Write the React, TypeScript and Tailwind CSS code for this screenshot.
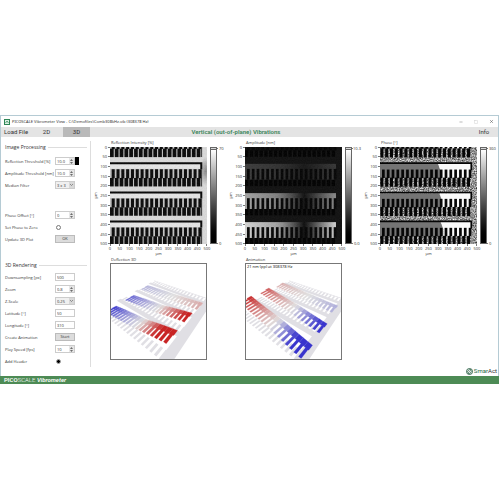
import React, { useId, useState } from 'react';
import { Minus, Square, X } from 'lucide-react';

type MapKind = 'reflection' | 'amplitude' | 'phase';
type Point = [number, number];

const TICKS = [0, 50, 100, 150, 200, 250, 300, 350, 400, 450, 500];

// Top edge of each comb row, in map units (288 units = 500 µm)
const ROWS = [-42, 45, 132, 218];
const PITCH = 14.3;
const TEETH = Array.from({ length: 19 }, (_, i) => i);

const AMPLITUDE_STOPS = [
  ['#0c0c0c', '#0a0a0a', '#0c0c0c'],
  ['#3c3c3c', '#161616', '#363636'],
  ['#a4a4a4', '#101010', '#8c8c8c'],
  ['#d4d4d4', '#0c0c0c', '#d4d4d4'],
];

const MAPS: { kind: MapKind; title: string; max: string; min: string }[] = [
  { kind: 'reflection', title: 'Reflection Intensity [%]', max: '70', min: '0' },
  { kind: 'amplitude', title: 'Amplitude [nm]', max: '10.3', min: '0.0' },
  { kind: 'phase', title: 'Phase [°]', max: '360', min: '0' },
];

function ReflectionMap() {
  return (
    <>
      {ROWS.map((b) => (
        <g key={b}>
          <rect x={0} y={b + 6} width={270} height={14} fill="#e8e8e8" />
          <rect x={0} y={b + 20} width={270} height={52} fill="#c4c4c4" />
          <path d={`M0 ${b + 3}H271V${b + 21}`} fill="none" stroke="#050505" strokeWidth={6} />
          {TEETH.map((i) => (
            <g key={i} fill="#080808">
              <rect x={i * PITCH + 5} y={b + 21} width={9} height={27} />
              <rect x={i * PITCH} y={b + 47} width={11} height={25} />
            </g>
          ))}
          <path d={`M272 ${b + 21}V${b + 72}`} stroke="#333333" strokeWidth={3} />
        </g>
      ))}
    </>
  );
}

function AmplitudeMap({ id }: { id: string }) {
  return (
    <>
      {ROWS.map((b, row) => (
        <g key={b}>
          <linearGradient id={`${id}-amp-${row}`} gradientUnits="userSpaceOnUse" x1="0" y1="0" x2="270" y2="0">
            <stop offset="0" stopColor={AMPLITUDE_STOPS[row][0]} />
            <stop offset="0.35" stopColor={AMPLITUDE_STOPS[row][0]} stopOpacity="0.75" />
            <stop offset="0.65" stopColor={AMPLITUDE_STOPS[row][1]} />
            <stop offset="1" stopColor={AMPLITUDE_STOPS[row][2]} />
          </linearGradient>
          {TEETH.map((i) => (
            <rect key={i} x={i * PITCH} y={b + 46} width={10} height={25} fill="#000000" />
          ))}
          <rect x={0} y={b + 5} width={270} height={47} fill={`url(#${id}-amp-${row})`} />
          {TEETH.map((i) => (
            <rect key={i} x={i * PITCH + 6} y={b + 20} width={8} height={32} fill="#040404" />
          ))}
        </g>
      ))}
    </>
  );
}

function PhaseMap() {
  return (
    <>
      {ROWS.map((b, row) => {
        const split = 168 + row * 4;
        return (
          <g key={b}>
            <path d={`M0 ${b + 5}H${split}L${split + 8} ${b + 26}V${b + 48}H0Z`} fill="#747474" />
            <path d={`M${split} ${b + 5}H271V${b + 48}H${split + 8}V${b + 26}Z`} fill="#fafafa" />
            <path d={`M0 ${b + 3}H271V${b + 24}`} fill="none" stroke="#050505" strokeWidth={5} />
            {TEETH.map((i) => (
              <g key={i} fill="#060606">
                <rect x={i * PITCH + 6} y={b + 22} width={8} height={25} />
                <rect x={i * PITCH + 1} y={b + 46} width={9} height={27} />
              </g>
            ))}
          </g>
        );
      })}
    </>
  );
}

function HeatMap({ kind, title }: { kind: MapKind; title: string }) {
  const id = useId();
  return (
    <svg viewBox="0 0 288 288" role="img" aria-label={title} className="block aspect-square w-full">
      <filter id={`${id}-fine`} x="0" y="0" width="100%" height="100%" colorInterpolationFilters="sRGB">
        <feTurbulence type="fractalNoise" baseFrequency="0.28" numOctaves={2} seed={7} />
        <feColorMatrix values="1.2 0 0 0 -0.02  1.2 0 0 0 -0.02  1.2 0 0 0 -0.02  0 0 0 0 1" />
      </filter>
      <radialGradient id={`${id}-shade`}>
        <stop offset="0" stopColor="#8a8a8a" />
        <stop offset="1" stopColor="#8a8a8a" stopOpacity="0" />
      </radialGradient>
      {kind === 'reflection' && (
        <>
          <rect width={288} height={288} fill="#dcdcdc" />
          <ellipse cx={284} cy={72} rx={18} ry={42} fill={`url(#${id}-shade)`} />
          <ReflectionMap />
          <rect width={288} height={288} filter={`url(#${id}-fine)`} opacity={0.05} />
        </>
      )}
      {kind === 'amplitude' && (
        <>
          <rect width={288} height={288} fill="#101010" />
          <AmplitudeMap id={id} />
          <rect width={288} height={288} filter={`url(#${id}-fine)`} opacity={0.04} />
        </>
      )}
      {kind === 'phase' && (
        <>
          <rect width={288} height={288} filter={`url(#${id}-fine)`} />
          <PhaseMap />
        </>
      )}
    </svg>
  );
}

// Perspective mapping of the flat sample onto the four corners of the tilted plane
const CORNERS: Point[] = [[132, 50], [306, 108], [172, 302], [-36, 140]];

function project(x: number, y: number, lift = 0): Point {
  const [[x0, y0], [x1, y1], [x2, y2], [x3, y3]] = CORNERS;
  const u = x / 288;
  const v = y / 288;
  const dx1 = x1 - x2, dx2 = x3 - x2, dx3 = x0 - x1 + x2 - x3;
  const dy1 = y1 - y2, dy2 = y3 - y2, dy3 = y0 - y1 + y2 - y3;
  const det = dx1 * dy2 - dx2 * dy1;
  const g = (dx3 * dy2 - dx2 * dy3) / det;
  const h = (dx1 * dy3 - dx3 * dy1) / det;
  const w = g * u + h * v + 1;
  return [
    ((x1 - x0 + g * x1) * u + (x3 - x0 + h * x3) * v + x0) / w,
    ((y1 - y0 + g * y1) * u + (y3 - y0 + h * y3) * v + y0) / w - lift,
  ];
}

const SWING = [
  { left: 0, right: 0 },
  { left: 4, right: 4 },
  { left: 11, right: 16 },
  { left: 15, right: 22 },
];

function deflection(row: number, x: number) {
  const node = 165;
  const { left, right } = SWING[row];
  return x < node ? -left * (1 - x / node) : right * ((x - node) / (270 - node));
}

function blend(value: number) {
  const t = Math.min(1, Math.abs(value) / 15);
  const end = value > 0 ? [200, 36, 36] : [56, 52, 205];
  const [r, g, b] = end.map((c) => Math.round(224 + (c - 224) * t));
  return `rgb(${r},${g},${b})`;
}

function quad(x: number, y: number, w: number, h: number, liftA = 0, liftB = liftA) {
  return [project(x, y, liftA), project(x + w, y, liftB), project(x + w, y + h, liftB), project(x, y + h, liftA)]
    .map((p) => p.join(','))
    .join(' ');
}

function Surface({ phase, title }: { phase: 1 | -1; title: string }) {
  return (
    <svg viewBox="0 0 288 288" role="img" aria-label={title} className="block aspect-square w-full">
      <g fill="#e0dfe4">
        <polygon points={quad(268, 0, 26, 288)} />
        {ROWS.map((b) => (
          <g key={b}>
            <polygon points={quad(0, b + 70, 276, Math.min(17, 288 - b - 70))} />
            {TEETH.map((i) => (
              <polygon key={i} points={quad(i * PITCH + 9, b + 48, 7, 25)} />
            ))}
          </g>
        ))}
        <polygon points={quad(0, 0, 276, 5)} />
      </g>
      {ROWS.slice(1).map((b, r) => (
        <g key={b}>
          {TEETH.map((i) => {
            const x = i * PITCH;
            const a = deflection(r + 1, x) * phase;
            const c = deflection(r + 1, x + PITCH) * phase;
            const color = blend(c);
            return (
              <g key={i} fill={color} stroke={color} strokeWidth={0.6}>
                <polygon points={quad(x, b + 4, PITCH, 18, a, c)} />
                <polygon points={quad(x + 4, b + 20, 8, 30, c, c)} />
              </g>
            );
          })}
        </g>
      ))}
    </svg>
  );
}

function Plot({ kind, title, max, min }: (typeof MAPS)[number]) {
  return (
    <figure className="min-w-0">
      <figcaption className="h-[8px] pl-[20px] leading-[8px]">{title}</figcaption>
      <div className="flex">
        <div className="flex w-[7px] shrink-0 items-center justify-end">
          <span className="-rotate-90">µm</span>
        </div>
        <div className="flex w-[12px] shrink-0 flex-col justify-between">
          {TICKS.map((t) => (
            <div key={t} className="flex h-0 items-center justify-end gap-px">
              {t}
              <i className="h-px w-[2px] bg-[#777]" />
            </div>
          ))}
        </div>
        <div className="min-w-0 flex-1">
          <HeatMap kind={kind} title={title} />
        </div>
        <div className="ml-[3px] flex w-[7px] shrink-0 flex-col border border-[#666] bg-[#d8d8d8] pt-px">
          <div className="flex-1 border-t border-[#666] bg-linear-to-b from-white to-black" />
        </div>
        <div className="flex w-[9px] shrink-0 flex-col justify-between py-px">
          {[max, min].map((t) => (
            <div key={t} className="flex h-0 items-center gap-px">
              <i className="h-px w-px bg-[#777]" />
              {t}
            </div>
          ))}
        </div>
      </div>
      <div className="mx-[19px] flex h-[7px] justify-between">
        {TICKS.map((t) => (
          <div key={t} className="flex w-0 flex-col items-center">
            <i className="h-[2px] w-px bg-[#777]" />
            {t}
          </div>
        ))}
      </div>
      <div className="mx-[19px] h-[6px] text-center">µm</div>
    </figure>
  );
}

function View3D({ title, phase, header }: { title: string; phase: 1 | -1; header?: string }) {
  return (
    <figure className="mx-[19px] min-w-0">
      <figcaption className="h-[6px] pl-px">{title}</figcaption>
      <div className="relative border border-[#777]">
        <Surface phase={phase} title={title} />
        {header && <span className="absolute top-0 left-px leading-[5px] text-black">{header}</span>}
      </div>
    </figure>
  );
}

function SectionTitle({ children }: { children: React.ReactNode }) {
  return (
    <h2 className="flex h-[12px] items-center gap-[2px] text-[5px] whitespace-nowrap">
      {children}
      <span className="h-px flex-1 bg-[#ddd]" />
    </h2>
  );
}

function Row({ id, label, children }: { id: string; label: string; children: React.ReactNode }) {
  return (
    <div className="flex h-[12px] items-center">
      <label htmlFor={id} className="w-[50px] shrink-0 whitespace-nowrap">
        {label}
      </label>
      {children}
    </div>
  );
}

function TextBox({ id, initial, spinner }: { id: string; initial: string; spinner?: boolean }) {
  const [value, setValue] = useState(initial);
  const step = (d: number) => setValue((v) => String(Number(v) + d));
  return (
    <div className="flex h-[8px] w-[20px] border border-[#ccc] bg-white">
      <input
        id={id}
        value={value}
        onChange={(e) => setValue(e.target.value)}
        className="min-w-0 flex-1 pl-px outline-none"
      />
      {spinner && (
        <div className="flex w-[5px] flex-col bg-[#e6e6e6]">
          <button type="button" aria-label="Increase" onClick={() => step(1)} className="flex flex-1 items-center justify-center">
            <svg viewBox="0 0 4 2" className="h-[2px] w-[3px]"><path d="M0 2L2 0L4 2Z" fill="#444" /></svg>
          </button>
          <button type="button" aria-label="Decrease" onClick={() => step(-1)} className="flex flex-1 items-center justify-center">
            <svg viewBox="0 0 4 2" className="h-[2px] w-[3px]"><path d="M0 0L2 2L4 0Z" fill="#444" /></svg>
          </button>
        </div>
      )}
    </div>
  );
}

function Dropdown({ id, options }: { id: string; options: string[] }) {
  return (
    <div className="flex h-[8px] w-[20px] border border-[#ccc] bg-[#f0f0f0]">
      <select id={id} className="min-w-0 flex-1 appearance-none pl-px outline-none">
        {options.map((o) => (
          <option key={o}>{o}</option>
        ))}
      </select>
      <span className="pointer-events-none flex w-[5px] items-center justify-center bg-[#d8d8d8]">
        <svg viewBox="0 0 6 4" className="h-[2px] w-[3px]"><path d="M0 0L3 3L6 0" fill="none" stroke="#444" /></svg>
      </span>
    </div>
  );
}

const radioClass =
  'ml-px h-[5px] w-[5px] appearance-none rounded-full border border-[#777] bg-white checked:border-[#aaa] checked:bg-black';
const buttonClass = 'h-[8px] w-[20px] border border-[#bbb] bg-[#dcdcdc] text-center leading-[6px]';

function Sidebar() {
  return (
    <aside className="mt-[4px] mb-[9px] w-[90px] shrink-0 border-r border-[#ddd] pr-[3px] pl-[4px]">
      <SectionTitle>Image Processing</SectionTitle>
      <div className="mt-[2px]">
        <Row id="reflection" label="Reflection Threshold [%]">
          <TextBox id="reflection" initial="10.0" spinner />
          <span className="h-[8px] w-[4px] bg-black" />
        </Row>
        <Row id="amplitude" label="Amplitude Threshold [nm]">
          <TextBox id="amplitude" initial="10.0" spinner />
        </Row>
        <Row id="median" label="Median Filter">
          <Dropdown id="median" options={['3 x 3', '5 x 5', '7 x 7']} />
        </Row>
      </div>
      <div className="mt-[18px] mb-[14px]">
        <Row id="offset" label="Phase Offset [°]">
          <TextBox id="offset" initial="0" spinner />
        </Row>
        <Row id="zero" label="Set Phase to Zero">
          <input id="zero" name="zero" type="radio" className={radioClass} />
        </Row>
        <Row id="update" label="Update 3D Plot">
          <button id="update" type="button" className={buttonClass}>OK</button>
        </Row>
      </div>
      <SectionTitle>3D Rendering</SectionTitle>
      <Row id="down" label="Downsampling [px]">
        <TextBox id="down" initial="500" />
      </Row>
      <Row id="zoom" label="Zoom">
        <TextBox id="zoom" initial="0.8" spinner />
      </Row>
      <Row id="zscale" label="Z-Scale">
        <Dropdown id="zscale" options={['0.25', '0.5', '1']} />
      </Row>
      <Row id="lat" label="Latitude [°]">
        <TextBox id="lat" initial="50" />
      </Row>
      <Row id="long" label="Longitude [°]">
        <TextBox id="long" initial="310" />
      </Row>
      <Row id="create" label="Create Animation">
        <button id="create" type="button" className={buttonClass}>Start</button>
      </Row>
      <Row id="speed" label="Play Speed [fps]">
        <TextBox id="speed" initial="10" spinner />
      </Row>
      <Row id="header" label="Add Header">
        <input id="header" name="header" type="radio" defaultChecked className={radioClass} />
      </Row>
    </aside>
  );
}

function SmarActLogo() {
  return (
    <div className="flex items-center gap-px self-end pr-px font-['Roboto',sans-serif] text-[6px] leading-[8px] text-[#1d6b43]">
      <svg viewBox="0 0 14 14" className="h-[7px] w-[7px]">
        <circle cx="7" cy="7" r="6" fill="none" stroke="#245c40" strokeWidth="1.8" />
        <path d="M10 4.2C7 2.4 4 4 5.4 6S10.8 8 9 10S5 10.6 3.8 9.4M2.6 6L6 11.5M8 2.4L11.6 7.6" fill="none" stroke="#245c40" strokeWidth="1.5" />
      </svg>
      <span>Smar<span className="text-[#333]">Act</span></span>
    </div>
  );
}

export default function App() {
  return (
    <div className="min-h-screen bg-white pt-[115px] font-['Open_Sans','Noto_Sans',sans-serif] text-[4px] leading-[5px] text-[#333]">
      <div className="mr-px border-t border-r border-l border-[#b5cbd4]">
        {/* Title bar */}
        <header className="flex h-[11px] items-center gap-[2px] pr-[4px] pl-[3px]">
          <svg viewBox="0 0 12 12" className="h-[6px] w-[6px]">
            <rect x="1" y="1" width="10" height="10" fill="#dcefe3" stroke="#2f8657" strokeWidth="2" />
            <path d="M3 8L6 4L9 8" fill="none" stroke="#2f8657" strokeWidth="1.5" />
          </svg>
          <h1 className="flex-1 font-['Noto_Sans',sans-serif]">
            PICOSCALE Vibrometer View - C:\Demofiles\Comb308kHz.vib (308378 Hz)
          </h1>
          <div className="flex gap-[11px]">
            <button type="button" aria-label="Minimize"><Minus size={4} /></button>
            <button type="button" aria-label="Maximize"><Square size={4} className="text-[#bbb]" /></button>
            <button type="button" aria-label="Close"><X size={5} /></button>
          </div>
        </header>

        {/* Tabs */}
        <nav className="flex h-[10px] items-stretch bg-[#e4e4e4] font-['Roboto',sans-serif] text-[6px] leading-[8px]">
          <button type="button" className="w-[29px] pl-[3px] text-left">Load File</button>
          <button type="button" className="w-[33px]">2D</button>
          <button type="button" className="w-[27px] bg-[#b9b9b9]">3D</button>
          <h2 className="flex flex-1 items-center justify-center pr-[88px] font-semibold text-[#3b855a]">
            Vertical (out-of-plane) Vibrations
          </h2>
          <button type="button" className="w-[28px]">Info</button>
        </nav>

        {/* Content */}
        <main className="flex">
          <Sidebar />
          <div className="flex min-w-0 flex-1 flex-col pt-[2px] pb-px">
            <div className="mr-[2px] grid grid-cols-3">
              {MAPS.map((m) => (
                <Plot key={m.kind} {...m} />
              ))}
              <View3D title="Deflection 3D" phase={1} />
              <View3D title="Animation" phase={-1} header="21 nm (pp) at 308378 Hz" />
            </div>
            <div className="mt-auto flex flex-col">
              <SmarActLogo />
            </div>
          </div>
        </main>

        <footer className="-mr-px -ml-px h-[8px] bg-[#4d8b55] pl-[4px] font-['Roboto',sans-serif] text-[6px] leading-[8px] text-white">
          <span className="font-semibold">PICO</span>
          <span className="font-light">SCALE</span> <em className="font-semibold">Vibrometer</em>
        </footer>
      </div>
    </div>
  );
}
